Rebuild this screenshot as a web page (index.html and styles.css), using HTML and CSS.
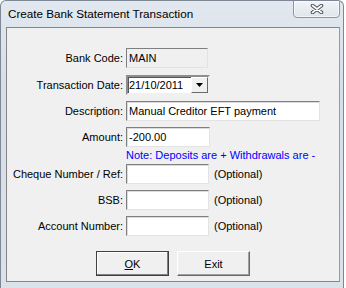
FILE: index.html
```html
<!DOCTYPE html>
<html lang="en">
<head>
    <meta charset="UTF-8">
    <title>Create Bank Statement Transaction</title>
    <link rel="stylesheet" href="styles.css">
</head>
<body>
    <div class="window">
        <div class="titlebar">
            <span class="title">Create Bank Statement Transaction</span>
            <button class="close-btn" title="Close">
                <svg width="14" height="10" viewBox="0 0 14 10">
                    <path d="M2.5 1.5 L11.5 8.5 M11.5 1.5 L2.5 8.5" stroke="#4b525c" stroke-width="3.6" stroke-linecap="round"/>
                    <path d="M2.5 1.5 L11.5 8.5 M11.5 1.5 L2.5 8.5" stroke="#ffffff" stroke-width="1.6" stroke-linecap="round"/>
                </svg>
            </button>
        </div>
        <div class="panel">
            <div class="row first">
                <label>Bank Code:</label>
                <input class="box readonly w82" type="text" value="MAIN" readonly>
            </div>
            <div class="row date-row">
                <label>Transaction Date:</label>
                <div class="combo">
                    <span class="combo-text">21/10/2011</span>
                    <span class="combo-btn">
                        <svg width="7" height="4" viewBox="0 0 7 4"><path d="M0 0 H7 L3.5 4 Z" fill="#000"/></svg>
                    </span>
                </div>
            </div>
            <div class="row">
                <label>Description:</label>
                <input class="box w194" type="text" value="Manual Creditor EFT payment">
            </div>
            <div class="row">
                <label>Amount:</label>
                <input class="box w84" type="text" value="-200.00">
            </div>
            <div class="row note-row">
                <span></span>
                <span class="note">Note: Deposits are + Withdrawals are -</span>
            </div>
            <div class="row cheque-row">
                <label>Cheque Number / Ref:</label>
                <div class="field">
                    <input class="box w83" type="text">
                    <span class="optional">(Optional)</span>
                </div>
            </div>
            <div class="row">
                <label>BSB:</label>
                <div class="field">
                    <input class="box w83" type="text">
                    <span class="optional">(Optional)</span>
                </div>
            </div>
            <div class="row">
                <label>Account Number:</label>
                <div class="field">
                    <input class="box w83" type="text">
                    <span class="optional">(Optional)</span>
                </div>
            </div>
            <div class="buttons">
                <button class="btn btn-default"><u>O</u>K</button>
                <button class="btn">Exit</button>
            </div>
        </div>
    </div>
</body>
</html>
```
FILE: styles.css
```css
body {
    margin: 0;
    background: #ffffff;
    font-family: "Liberation Sans", Arial, sans-serif;
    font-size: 11px;
    color: #000;
}

.window {
    width: 344px;
    height: 288px;
    box-sizing: border-box;
    border: 1px solid #7d8894;
    border-bottom: none;
    border-radius: 6px 6px 0 0;
    background: linear-gradient(#e2e8ef, #d6dee7 30%, #dbe2ea);
    padding: 0 3px 0 5px;
    overflow: hidden;
}

.titlebar {
    height: 26px;
    display: flex;
    justify-content: space-between;
    align-items: flex-start;
}

.title {
    font-size: 11.7px;
    margin: 6px 0 0 2px;
    line-height: 14px;
    color: #000;
}

.close-btn {
    width: 47px;
    height: 18px;
    margin-top: -1px;
    padding: 0;
    border: 1px solid #8b96a2;
    border-radius: 0 0 4px 4px;
    background: linear-gradient(#f1f4f7, #dfe5eb);
    box-shadow: inset 0 0 0 1px rgba(255, 255, 255, 0.6);
    display: flex;
    align-items: center;
    justify-content: center;
}

.panel {
    width: 334px;
    height: 255px;
    box-sizing: border-box;
    background: #f0f0f0;
    border: 1px solid #858585;
    border-right-color: #9a9a9a;
    padding: 20px 0 0 0;
}

.row {
    display: grid;
    grid-template-columns: 116px auto;
    column-gap: 3px;
    align-items: center;
    height: 20px;
    margin-top: 6px;
}

.row.first {
    margin-top: 0;
}

.row.date-row {
    margin-top: 7px;
}

.row label {
    text-align: right;
    white-space: nowrap;
}

.box {
    height: 20px;
    box-sizing: border-box;
    margin: 0;
    padding: 0 2px;
    font-family: inherit;
    font-size: 11px;
    color: #000;
    background: #fff;
    border: 1px solid;
    border-color: #7f7f7f #e3e3e3 #e3e3e3 #7f7f7f;
    box-shadow: inset 1px 1px 0 #dcdcdc;
    outline: none;
}

.box.readonly {
    background: #f0f0f0;
    box-shadow: none;
}

.w82 { width: 82px; }
.w83 { width: 83px; }
.w84 { width: 84px; }
.w194 { width: 194px; }

.combo {
    width: 84px;
    height: 20px;
    box-sizing: border-box;
    background: #fff;
    border: 2px solid;
    border-color: #8d8d8d #f0f0f0 #f0f0f0 #8d8d8d;
    box-shadow: inset 1px 1px 0 #555;
    display: flex;
    align-items: center;
    justify-content: space-between;
    padding-left: 1px;
}

.combo-text {
    line-height: 16px;
}

.combo-btn {
    width: 17px;
    height: 16px;
    box-sizing: border-box;
    background: #f0f0f0;
    border: 1px solid;
    border-color: #fff #696969 #696969 #fff;
    display: flex;
    align-items: center;
    justify-content: center;
}

.note-row {
    height: 13px;
    margin-top: 1px;
}

.note {
    color: #0000ff;
    white-space: nowrap;
}

.cheque-row {
    margin-top: 3px;
}

.field {
    display: flex;
    align-items: center;
    gap: 5px;
}

.optional {
    white-space: nowrap;
}

.buttons {
    display: flex;
    justify-content: center;
    gap: 8px;
    margin-top: 15px;
}

.btn {
    width: 73px;
    height: 25px;
    padding: 0;
    font-family: inherit;
    font-size: 11px;
    color: #000;
    background: #f0f0f0;
    border: 1px solid;
    border-color: #fff #696969 #696969 #fff;
    box-shadow: inset -1px -1px 0 #a0a0a0;
}

.btn-default {
    border: 1px solid #404040;
    box-shadow: inset -1px -1px 0 #808080, inset 1px 1px 0 #fff;
}
```
